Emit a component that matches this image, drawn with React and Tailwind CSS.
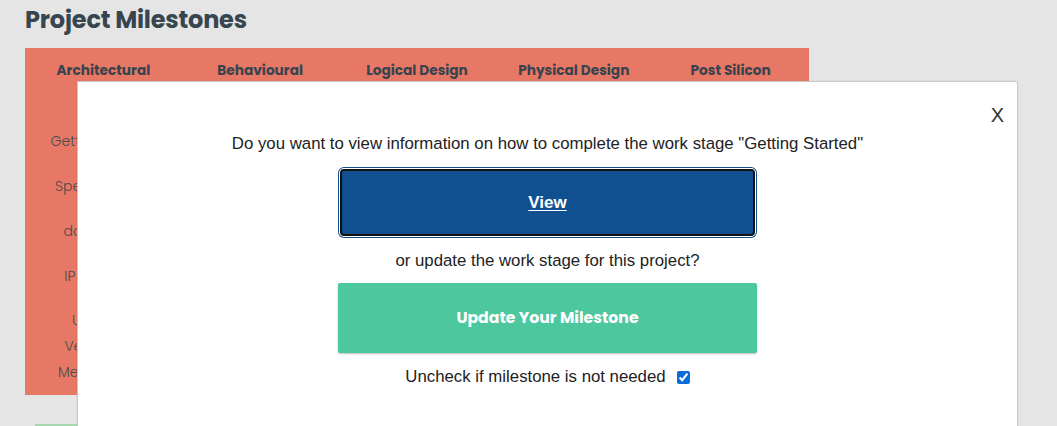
import React, { useState } from "react";

const headings = [
  "Architectural",
  "Behavioural",
  "Logical Design",
  "Physical Design",
  "Post Silicon",
];

const stages = ["Getting Started", "Specifications", "documents", "IP Selection"];

export default function App() {
  const [needed, setNeeded] = useState(true);

  return (
    <div className="relative h-[426px] overflow-hidden bg-[#e5e5e5] font-['Liberation_Sans',Arial,sans-serif]">
      <div className="px-[25px] pt-[4px]">
        <h1 className="text-[24px] leading-[32px] font-bold text-[#36454f] font-['Poppins','Inter',sans-serif] tracking-[-0.2px]">
          Project Milestones
        </h1>

        {/* Milestone board */}
        <div className="mt-[12px] w-[784px] bg-[#e67865] pt-[14px] pb-[10px] font-['Poppins','Inter',sans-serif]">
          <div className="grid grid-cols-5">
            {headings.map((h) => (
              <div
                key={h}
                className="text-center text-[13.7px] leading-[18px] font-bold text-[#37434e]"
              >
                {h}
              </div>
            ))}
          </div>
          <div className="grid grid-cols-5 mt-[52px]">
            <div className="flex flex-col items-center gap-[27px] text-center text-[14px] leading-[18px] font-light text-[#4b4b4b]">
              {stages.map((s) => (
                <div key={s}>{s}</div>
              ))}
              <div className="-mt-[5px] leading-[26px]">
                Universal
                <br />
                Verification
                <br />
                Methodology
              </div>
            </div>
          </div>
        </div>
        <div className="ml-[10px] mt-[29px] h-[2px] w-[60px] bg-[#a8d8b0]" />
      </div>

      {/* Modal */}
      <div className="absolute left-[77px] top-[81px] w-[941px] h-[400px] bg-white border border-[#c8c8c8] rounded-tr-[3px] shadow-[0_0_2px_rgba(0,0,0,0.1)]">
        <button className="absolute right-[13px] top-[21px] text-[20px] leading-[24px] font-light text-[#333]">
          X
        </button>
        <div className="flex flex-col items-center pt-[53px] text-[16.8px] leading-[18px] text-[#222]">
          <p>
            Do you want to view information on how to complete the work stage
            "Getting Started"
          </p>
          <button className="mt-[16px] w-[415px] h-[67px] rounded-[4px] border-2 border-[#111] bg-[#105090] shadow-[0_0_0_1px_#fff,0_0_0_2px_#105090] text-white text-[17px] font-bold underline underline-offset-2">
            View
          </button>
          <p className="mt-[16px]">or update the work stage for this project?</p>
          <button className="mt-[13px] w-[419px] h-[70px] rounded-[2px] bg-[#4dc79d] shadow-[0_1px_2px_rgba(0,0,0,0.25)] text-white text-[15.7px] font-bold font-['Poppins','Inter',sans-serif]">
            Update Your Milestone
          </button>
          <label className="mt-[15px] flex items-center gap-[11px]">
            <span>Uncheck if milestone is not needed</span>
            <input
              type="checkbox"
              checked={needed}
              onChange={() => setNeeded(!needed)}
              className="w-[13px] h-[13px] accent-[#0a6cd6]"
            />
          </label>
        </div>
      </div>
    </div>
  );
}
